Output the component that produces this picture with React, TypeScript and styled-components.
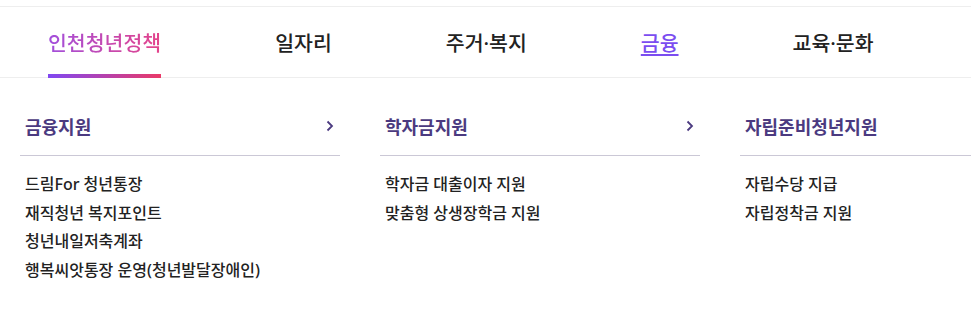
import React from 'react'
import styled, { createGlobalStyle } from 'styled-components'

const GlobalStyle = createGlobalStyle`
    body {
        margin: 0;
        background: #fff;
        font-family: "Noto Sans", "Noto Sans CJK KR", sans-serif;
    }
`
const Page = styled.div`
    padding-top: 6px;
`
const Nav = styled.nav`
    display: flex;
    gap: 114px;
    height: 70px;
    padding-left: 48px;
    border-top: 1px solid #eeeeee;
    border-bottom: 1px solid #eeeeee;
`
const Tab = styled.a<{ $active?: boolean; $current?: boolean }>`
    position: relative;
    display: flex;
    align-items: center;
    height: 100%;
    font-size: 20.5px;
    font-weight: 500;
    color: ${p => (p.$current ? '#7b4df0' : '#222')};
    text-decoration: ${p => (p.$current ? 'underline' : 'none')};
    text-underline-offset: 3px;
    cursor: pointer;
    ${p => p.$active && `
        span {
            background: linear-gradient(90deg, #a24fdc, #e4448a);
            -webkit-background-clip: text;
            background-clip: text;
            color: transparent;
        }
        &::after {
            content: '';
            position: absolute;
            left: 0;
            right: 0;
            bottom: -1px;
            height: 4px;
            background: linear-gradient(90deg, #8048f2, #ea3a68);
        }
    `}
`
const Panel = styled.div`
    display: grid;
    grid-template-columns: repeat(3, 320px);
    gap: 40px;
    padding: 33px 0 0 20px;
`
const Column = styled.div``
const TitleRow = styled.div`
    display: flex;
    align-items: center;
    justify-content: space-between;
    height: 30px;
    padding: 0 6px 14px 5px;
    border-bottom: 1px solid #cbc8d6;
`
const Title = styled.h3`
    margin: 0;
    font-size: 18px;
    font-weight: 700;
    color: #4b3a80;
`
const List = styled.ul`
    list-style: none;
    margin: 0;
    padding: 14px 0 0 5px;
`
const Item = styled.li`
    font-size: 16px;
    font-weight: 500;
    line-height: 28.5px;
    color: #222;
`

const Chevron = () => (
    <svg width="8" height="12" viewBox="0 0 8 12">
        <polyline points="1.5,1.5 6,6 1.5,10.5" fill="none" stroke="#4b3a80" strokeWidth="1.8" />
    </svg>
)

const tabs = [
    { label: '인천청년정책', active: true },
    { label: '일자리' },
    { label: '주거·복지' },
    { label: '금융', current: true },
    { label: '교육·문화' },
]

const groups = [
    { title: '금융지원', more: true, items: ['드림For 청년통장', '재직청년 복지포인트', '청년내일저축계좌', '행복씨앗통장 운영(청년발달장애인)'] },
    { title: '학자금지원', more: true, items: ['학자금 대출이자 지원', '맞춤형 상생장학금 지원'] },
    { title: '자립준비청년지원', more: false, items: ['자립수당 지급', '자립정착금 지원'] },
]

const App = () => (
    <Page>
        <GlobalStyle />
        <Nav>
            {tabs.map(t => (
                <Tab key={t.label} $active={t.active} $current={t.current}>
                    <span>{t.label}</span>
                </Tab>
            ))}
        </Nav>
        <Panel>
            {groups.map(g => (
                <Column key={g.title}>
                    <TitleRow>
                        <Title>{g.title}</Title>
                        {g.more && <Chevron />}
                    </TitleRow>
                    <List>
                        {g.items.map(i => (
                            <Item key={i}>{i}</Item>
                        ))}
                    </List>
                </Column>
            ))}
        </Panel>
    </Page>
)

export default App
